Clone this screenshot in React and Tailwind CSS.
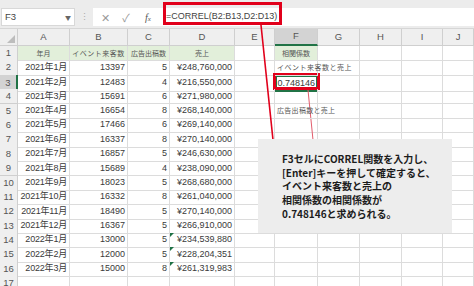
import React from "react";

const rows = [
  ["2021年1月", "13397", "5", "¥248,760,000"],
  ["2021年2月", "12483", "4", "¥216,550,000"],
  ["2021年3月", "15691", "6", "¥271,980,000"],
  ["2021年4月", "16654", "8", "¥268,140,000"],
  ["2021年5月", "17466", "6", "¥269,140,000"],
  ["2021年6月", "16337", "8", "¥270,140,000"],
  ["2021年7月", "16857", "5", "¥246,630,000"],
  ["2021年8月", "15689", "4", "¥238,090,000"],
  ["2021年9月", "18023", "5", "¥268,680,000"],
  ["2021年10月", "16332", "8", "¥261,040,000"],
  ["2021年11月", "18490", "5", "¥270,140,000"],
  ["2021年12月", "16367", "5", "¥266,910,000"],
  ["2022年1月", "13000", "5", "¥234,539,880", true],
  ["2022年2月", "12000", "5", "¥228,204,351", true],
  ["2022年3月", "15000", "8", "¥261,319,983", true],
];

const cols = ["A", "B", "C", "D", "E", "F", "G", "H", "I", "J"];
const gridCols =
  "grid grid-cols-[18px_52px_58px_42px_65px_40px_43px_42px_42px_41px_1fr]";

// plain cell with the light gridline
function Cell({ children, className = "" }) {
  return (
    <div
      className={`relative h-full border-r border-b border-[#dcdcdc] flex items-center px-[2px] whitespace-nowrap ${className}`}
    >
      {children}
    </div>
  );
}

function RowHead({ n, active }) {
  return (
    <div
      className={`h-full border-b border-r border-[#cfcfcf] flex items-center justify-center text-[9.5px] text-[#555] font-['Liberation_Sans',sans-serif] ${
        active ? "bg-[#d3d3d3] border-r-2 border-r-[#217346]" : "bg-[#efefef]"
      }`}
    >
      {n}
    </div>
  );
}

function ErrMark() {
  return (
    <span className="absolute left-0 top-0 w-0 h-0 border-t-[4px] border-t-[#1e7145] border-r-[4px] border-r-transparent" />
  );
}

export default function App() {
  return (
    <div className="relative w-[474px] h-[286px] overflow-hidden bg-white text-[#3a3a3a] font-['Noto_Sans_CJK_JP','Noto_Sans',sans-serif]">
      {/* Formula bar */}
      <div className="h-[29px] bg-[#ececec] flex items-end pb-[2px] border-b border-[#d6d6d6]">
        <div className="w-[74px] h-[18px] ml-[1px] bg-white border border-[#d8d8d8] flex items-center justify-between px-[3px]">
          <span className="text-[9.5px] text-[#444] font-['Liberation_Sans',sans-serif]">F3</span>
          <span className="text-[6px] text-[#666]">▼</span>
        </div>
        <div className="w-[18px] h-[18px] flex items-center justify-center text-[9px] text-[#aaa]">⋮</div>
        <div className="flex-1 h-[18px] bg-white flex items-center">
          <span className="w-[24px] text-center text-[11px] text-[#9a9a9a]">✕</span>
          <span className="w-[18px] text-center text-[11px] text-[#9a9a9a]">✓</span>
          <span className="w-[26px] text-center text-[10px] italic text-[#555] font-['Liberation_Serif',serif]">
            f<span className="text-[7px]">x</span>
          </span>
          <span className="pl-[5px] text-[9px] text-[#444] font-['Liberation_Sans',sans-serif]">
            =CORREL(B2:B13,D2:D13)
          </span>
        </div>
      </div>

      {/* Column headers */}
      <div className={`${gridCols} h-[17px]`}>
        <div className="relative h-full bg-[#efefef] border-r border-b border-[#cfcfcf]">
          <span className="absolute right-[2px] bottom-[2px] w-0 h-0 border-b-[8px] border-b-[#bdbdbd] border-l-[8px] border-l-transparent" />
        </div>
        {cols.map((c) => (
          <div
            key={c}
            className={`h-full border-r border-b border-[#cfcfcf] flex items-center justify-center text-[9.5px] text-[#555] font-['Liberation_Sans',sans-serif] ${
              c === "F" ? "bg-[#d3d3d3] border-b-2 border-b-[#217346]" : "bg-[#efefef]"
            }`}
          >
            {c}
          </div>
        ))}
      </div>

      {/* Row 1: headings */}
      <div className={`${gridCols} h-[14.4px] text-[7px] text-[#555]`}>
        <RowHead n={1} />
        <Cell className="bg-[#e2efda] justify-center">年月</Cell>
        <Cell className="bg-[#e2efda] justify-center tracking-[0.5px]">イベント来客数</Cell>
        <Cell className="bg-[#e2efda] justify-center">広告出稿数</Cell>
        <Cell className="bg-[#e2efda] justify-center">売上</Cell>
        <Cell />
        <Cell className="bg-[#e2efda] justify-center">相関係数</Cell>
        <Cell />
        <Cell />
        <Cell />
        <Cell />
      </div>

      {rows.map((r, i) => {
        const n = i + 2;
        let f = null;
        if (n === 2)
          f = (
            <Cell className="text-[7px] text-[#555] tracking-[0.5px] overflow-visible z-10">
              イベント来客数と売上
            </Cell>
          );
        else if (n === 3)
          f = (
            <div className="relative h-full">
              <div className="absolute -left-[2px] -top-[2px] w-[47px] h-[17px] border-[3px] border-[#e1001b]" />
              <div className="h-full border-2 border-[#217346] flex items-center justify-end pr-[1px] text-[9px] font-['Liberation_Sans',sans-serif]">
                0.748146
              </div>
            </div>
          );
        else if (n === 5)
          f = (
            <Cell className="text-[7px] text-[#555] tracking-[0.3px] overflow-visible z-10">
              広告出稿数と売上
            </Cell>
          );
        else f = <Cell />;
        return (
          <div key={n} className={`${gridCols} h-[14.4px] text-[9px]`}>
            <RowHead n={n} active={n === 3} />
            <Cell className="justify-end tracking-[-0.2px] font-['Liberation_Sans','Noto_Sans_CJK_JP',sans-serif]">
              {r[0]}
            </Cell>
            <Cell className="justify-end font-['Liberation_Sans',sans-serif]">{r[1]}</Cell>
            <Cell className="justify-end font-['Liberation_Sans',sans-serif]">{r[2]}</Cell>
            <Cell className="justify-end font-['Liberation_Sans',sans-serif]">
              {r[4] && <ErrMark />}
              {r[3]}
            </Cell>
            <Cell />
            {f}
            <Cell />
            <Cell />
            <Cell />
            <Cell />
          </div>
        );
      })}

      {/* Row 17 (cut off) */}
      <div className={`${gridCols} h-[14.4px] text-[9px]`}>
        <RowHead n={17} />
        {cols.map((c) => (
          <Cell key={c} />
        ))}
      </div>

      {/* Annotation: red box around the formula */}
      <div className="absolute left-[163px] top-[2px] w-[119px] h-[23px] border-[3px] border-[#e1001b]" />

      {/* Annotation lines */}
      <svg className="absolute left-0 top-0 pointer-events-none" width="474" height="286">
        <line x1="261" y1="25" x2="273" y2="140" stroke="#e1001b" strokeWidth="1.6" />
        <line x1="308" y1="90" x2="313" y2="140" stroke="#e25c6c" strokeWidth="1" />
      </svg>

      {/* Callout */}
      <div className="absolute left-[258px] top-[139px] w-[194px] h-[94px] bg-[#ededed] pl-[24px] pt-[13px] text-[10px] leading-[13.7px] font-bold text-[#1c1c1c]">
        <p>F3セルにCORREL関数を入力し、</p>
        <p>[Enter]キーを押して確定すると、</p>
        <p>イベント来客数と売上の</p>
        <p>相関係数の相関係数が</p>
        <p>0.748146と求められる。</p>
      </div>
    </div>
  );
}
